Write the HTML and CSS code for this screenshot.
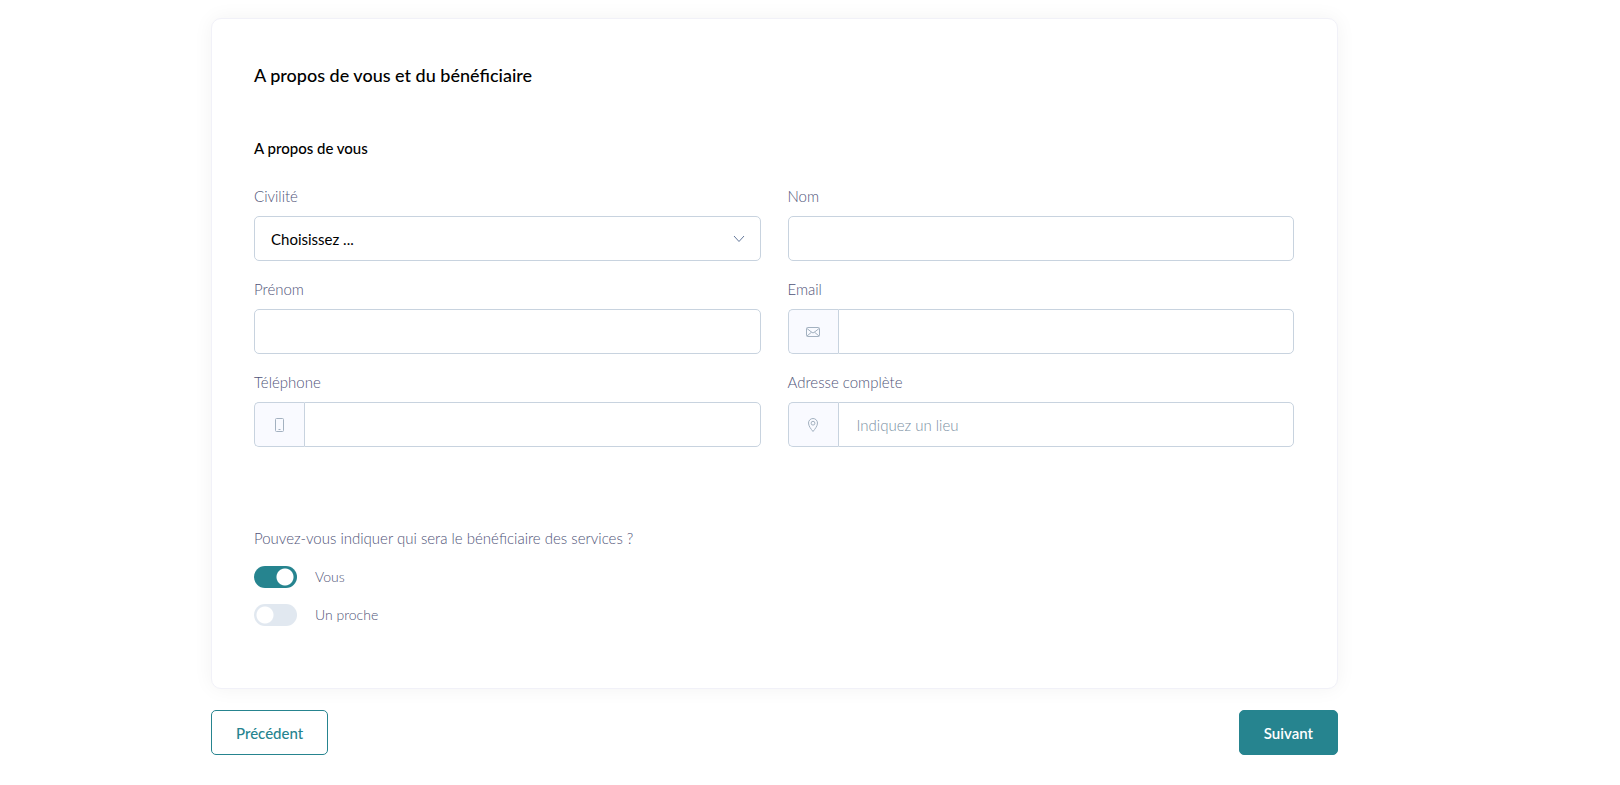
FILE: index.html
```html
<!DOCTYPE html>
<html lang="fr">
  <head>
    <meta charset="UTF-8" />
    <meta name="viewport" content="width=device-width, initial-scale=1.0" />
    <title>A propos de vous et du bénéficiaire</title>
    <link rel="stylesheet" href="styles.css">
  </head>
  <body>
    <form class="form-page">
      <div class="card">
        <h1 class="card-title">A propos de vous et du bénéficiaire</h1>
        <h2 class="section-title">A propos de vous</h2>

        <div class="form-grid">
          <div class="form-group">
            <label for="civilite">Civilité</label>
            <div class="select-wrap">
              <select id="civilite" name="civilite" class="form-control">
                <option value="">Choisissez ...</option>
                <option value="mme">Madame</option>
                <option value="m">Monsieur</option>
              </select>
              <svg class="select-arrow" viewBox="0 0 12 8" aria-hidden="true">
                <path d="M1 1l5 5.500L11 1" />
              </svg>
            </div>
          </div>

          <div class="form-group">
            <label for="nom">Nom</label>
            <input type="text" id="nom" name="nom" class="form-control" />
          </div>

          <div class="form-group">
            <label for="prenom">Prénom</label>
            <input type="text" id="prenom" name="prenom" class="form-control" />
          </div>

          <div class="form-group">
            <label for="email">Email</label>
            <div class="input-group">
              <span class="input-icon">
                <svg viewBox="0 0 14 14" aria-hidden="true">
                  <rect x="0.5" y="2.5" width="13" height="9" rx="1" />
                  <path d="M1 3.500l5 4q1 .7 2 0l5-4M1 11l4.500-3.800M13 11L8.500 7.200" />
                </svg>
              </span>
              <input type="email" id="email" name="email" class="form-control" />
            </div>
          </div>

          <div class="form-group">
            <label for="telephone">Téléphone</label>
            <div class="input-group">
              <span class="input-icon">
                <svg viewBox="0 0 14 14" aria-hidden="true">
                  <rect x="2.5" y="0.5" width="8" height="13" rx="1" />
                  <path d="M5.500 11.500h2" />
                </svg>
              </span>
              <input type="tel" id="telephone" name="telephone" class="form-control" />
            </div>
          </div>

          <div class="form-group">
            <label for="adresse">Adresse complète</label>
            <div class="input-group">
              <span class="input-icon">
                <svg viewBox="0 0 14 14" aria-hidden="true">
                  <path d="M7 13.5C5 11 2.5 8 2.5 5a4.5 4.5 0 0 1 9 0c0 3-2.500 6-4.500 8.500z" />
                  <circle cx="7" cy="5.200" r="1.900" />
                </svg>
              </span>
              <input type="text" id="adresse" name="adresse" class="form-control" placeholder="Indiquez un lieu" />
            </div>
          </div>
        </div>

        <fieldset class="beneficiary">
          <legend>Pouvez-vous indiquer qui sera le bénéficiaire des services ?</legend>
          <div class="switch">
            <input type="radio" id="vous" name="beneficiaire" value="vous" checked />
            <label for="vous">Vous</label>
          </div>
          <div class="switch">
            <input type="radio" id="proche" name="beneficiaire" value="proche" />
            <label for="proche">Un proche</label>
          </div>
        </fieldset>
      </div>

      <div class="form-actions">
        <button type="button" class="btn btn-outline">Précédent</button>
        <button type="submit" class="btn btn-primary">Suivant</button>
      </div>
    </form>
  </body>
</html>
```
FILE: styles.css
```css
* {
  box-sizing: border-box;
}

body {
  margin: 0;
  padding: 18px 282px 30px 211px;
  background-color: #fff;
  color: #000;
  font-family: Lato, "Liberation Sans", sans-serif;
  font-size: 15px;
  line-height: 20px;
}

.card {
  padding: 42px 43px 62px 42px;
  border: 1px solid #f1f1f8;
  border-radius: 10px;
  background-color: #fff;
  box-shadow: 0 0 20px rgba(0, 0, 0, 0.05);
}

.card-title {
  margin: 0 0 47px;
  font-size: 18px;
  font-weight: 500;
  line-height: 28px;
}

.section-title {
  margin: 0 0 26px;
  font-size: 15px;
  font-weight: 500;
  line-height: 24px;
}

.form-grid {
  display: grid;
  grid-template-columns: 1fr 1fr;
  gap: 18px 27px;
}

.form-group > label {
  display: block;
  margin-bottom: 10px;
  color: #4f5478;
  font-weight: 300;
}

.form-control {
  display: block;
  width: 100%;
  height: 45px;
  padding: 0 16px;
  border: 1px solid #c8d3df;
  border-radius: 5px;
  background-color: #fff;
  color: #000;
  font: inherit;
}

.form-control::placeholder {
  color: #7a8fa3;
  font-weight: 300;
  opacity: 1;
}

.form-control:focus {
  outline: none;
  border-color: #26848f;
}

.select-wrap {
  position: relative;
}

.select-wrap .form-control {
  appearance: none;
}

.select-arrow {
  position: absolute;
  top: 19px;
  right: 16px;
  width: 12px;
  height: 8px;
  fill: none;
  stroke: #63779a;
  pointer-events: none;
}

.input-group {
  display: flex;
}

.input-group .form-control {
  flex: 1;
  min-width: 0;
  padding-left: 18px;
  border-radius: 0 5px 5px 0;
}

.input-icon {
  display: flex;
  align-items: center;
  justify-content: center;
  width: 50px;
  border: 1px solid #c8d3df;
  border-right: none;
  border-radius: 5px 0 0 5px;
  background-color: #f9faff;
}

.input-icon svg {
  width: 14px;
  height: 14px;
  fill: none;
  stroke: #a3b1c0;
}

.beneficiary {
  display: flex;
  flex-direction: column;
  gap: 16px;
  margin: 81px 0 0;
  padding: 0;
  border: none;
  color: #4f5478;
  font-weight: 300;
}

.beneficiary legend {
  margin-bottom: 18px;
  padding: 0;
}

.switch {
  display: flex;
  align-items: center;
  gap: 18px;
  height: 22px;
  font-size: 14px;
}

.switch input {
  appearance: none;
  width: 43px;
  height: 22px;
  margin: 0;
  border-radius: 11px;
  background: #e1e8f0 radial-gradient(circle at 11px 11px, #fff 8px, transparent 9px);
  cursor: pointer;
}

.switch input:checked {
  background: #26848f radial-gradient(circle at 31px 11px, #fff 8px, transparent 9px);
}

.form-actions {
  display: flex;
  justify-content: space-between;
  margin-top: 21px;
}

.btn {
  height: 45px;
  padding: 0 24px;
  border: 1px solid #26848f;
  border-radius: 5px;
  font: inherit;
  font-weight: 500;
  cursor: pointer;
}

.btn-outline {
  background-color: #fff;
  color: #26848f;
}

.btn-primary {
  background-color: #26848f;
  color: #fff;
  font-weight: 600;
}
```
